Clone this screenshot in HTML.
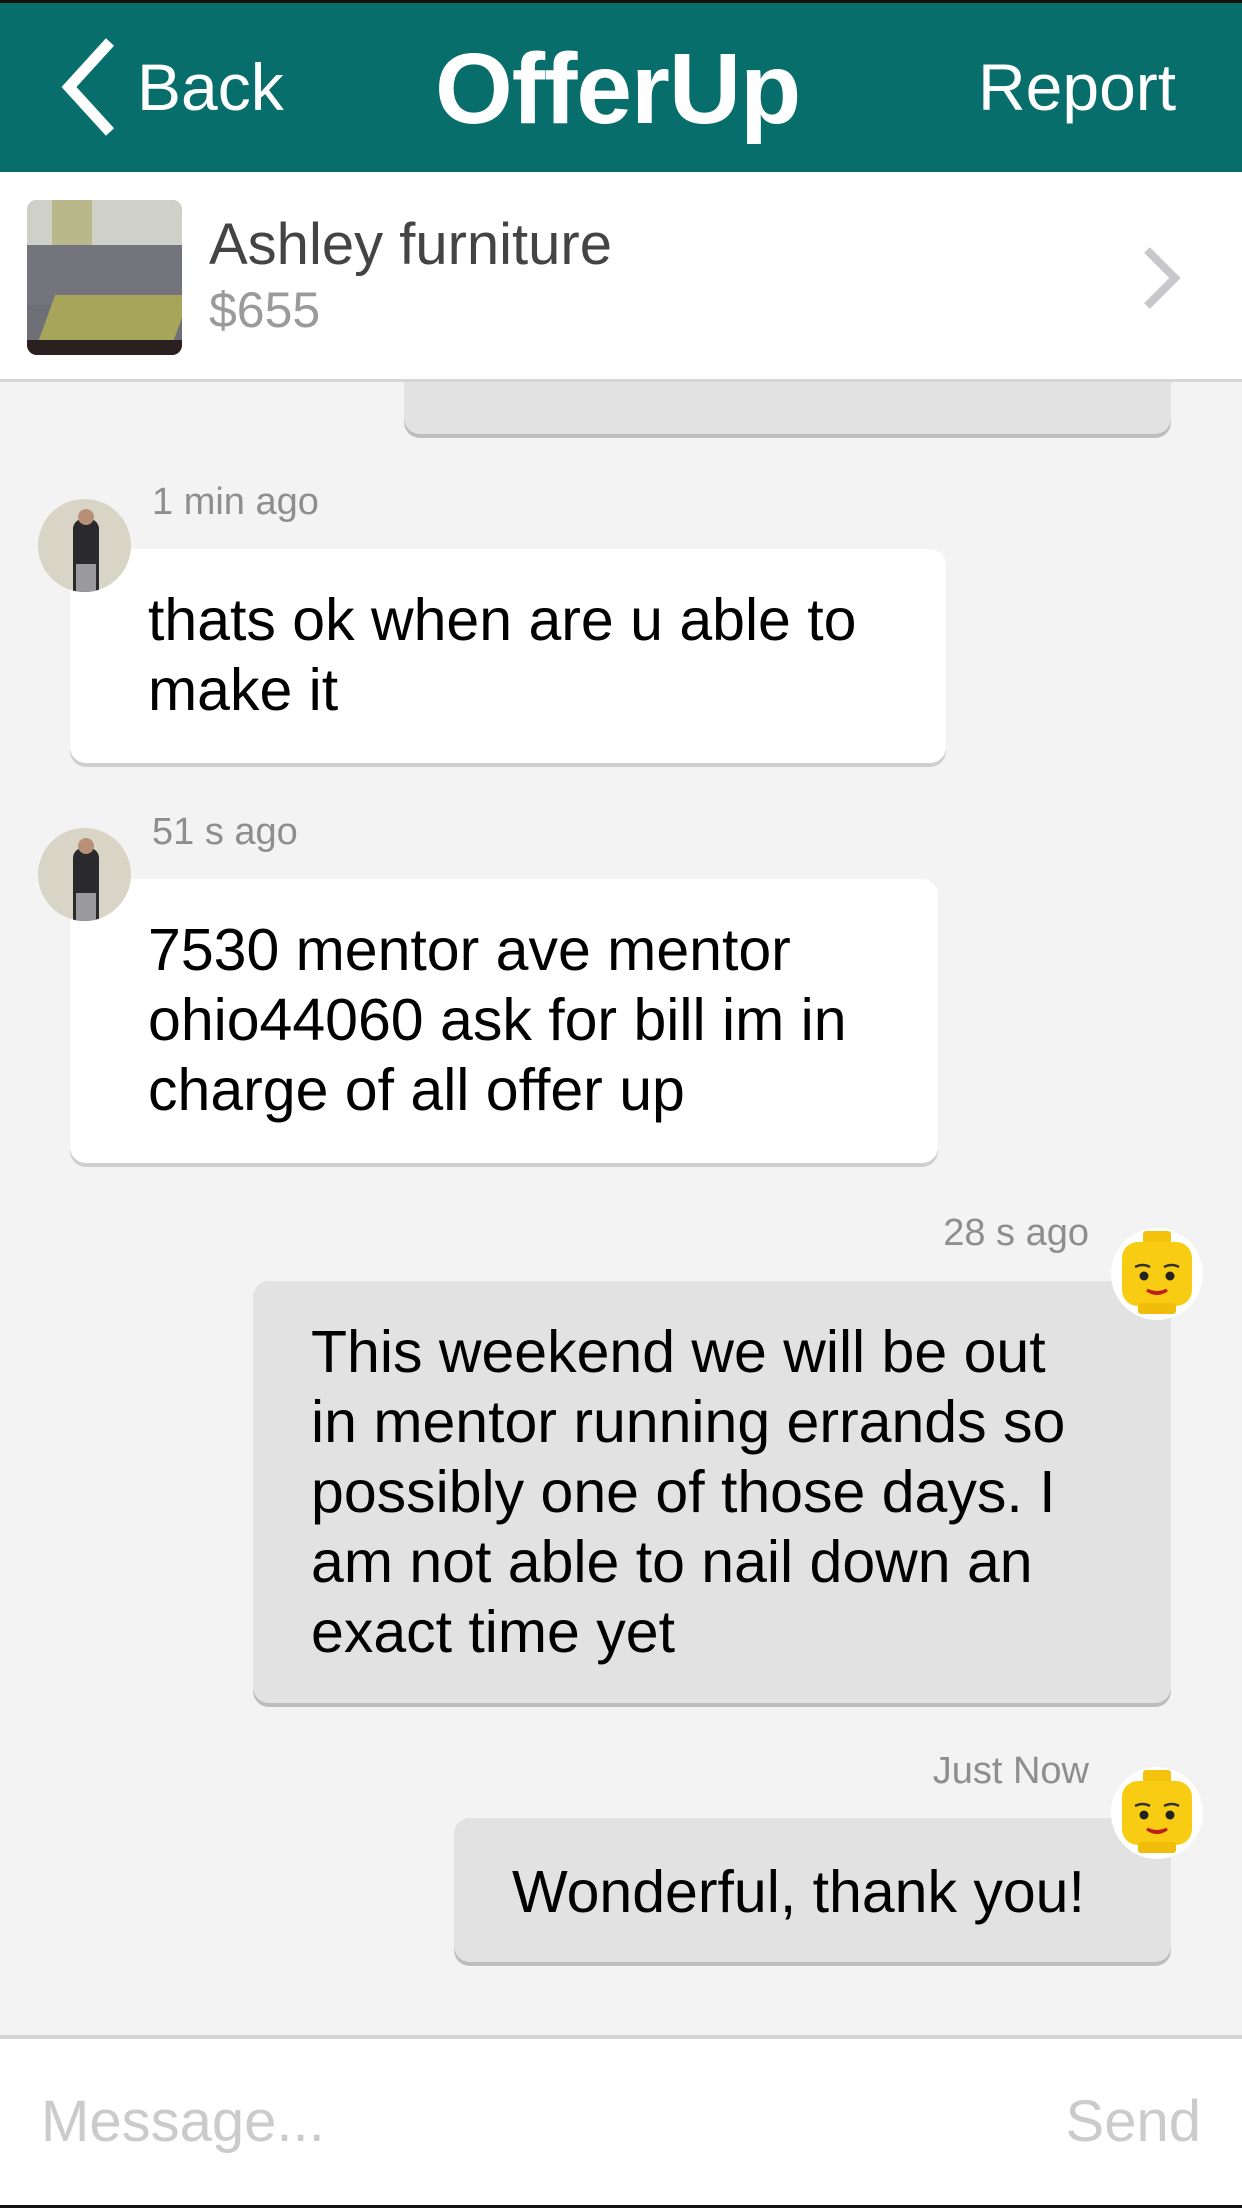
<!DOCTYPE html>
<html><head><meta charset="utf-8"><style>
*{margin:0;padding:0;box-sizing:border-box}
body{width:1242px;height:2208px;position:relative;overflow:hidden;background:#f3f3f3;font-family:"Liberation Sans",Arial,sans-serif}
.a{position:absolute;white-space:nowrap}
.hdr{left:0;top:0;width:1242px;height:172px;background:#076e6c;border-top:3px solid #111}
.bar{left:0;top:172px;width:1242px;height:210px;background:#fff;border-bottom:3px solid #d6d6d6}
.msg{font-size:59px;line-height:70px;color:#000}
.ts{font-size:38px;line-height:38px;color:#8e8e8e}
.wb{background:#fff;border-radius:16px;box-shadow:0 4px 0 #cfcfcf}
.gb{background:#e2e2e2;border-radius:16px;box-shadow:0 4px 0 #bdbdbd}
.av{border-radius:50%;overflow:hidden}
</style></head><body>
<div class="a hdr"></div>
<svg class="a" style="left:55px;top:36px" width="70" height="102" viewBox="0 0 70 102"><polyline points="55,6 14,51 55,96" fill="none" stroke="#fff" stroke-width="11"/></svg>
<div class="a" style="left:137px;top:54px;font-size:66px;line-height:66px;color:#fff">Back</div>
<div class="a" style="left:435px;top:39px;font-size:100px;line-height:100px;color:#fff;font-weight:bold;letter-spacing:-1px">OfferUp</div>
<div class="a" style="left:978px;top:54px;font-size:66px;line-height:66px;color:#fff">Report</div>

<div class="a bar"></div>
<div class="a" style="left:27px;top:200px;width:155px;height:155px;border-radius:10px;overflow:hidden;background:#6f6f78">
 <div class="a" style="left:0;top:0;width:155px;height:50px;background:#cfd0c8"></div>
 <div class="a" style="left:25px;top:0;width:40px;height:55px;background:#b8b88a"></div>
 <div class="a" style="left:0;top:45px;width:155px;height:60px;background:#74747c"></div>
 <div class="a" style="left:20px;top:95px;width:135px;height:45px;background:#a7a55a;transform:skewX(-20deg)"></div>
 <div class="a" style="left:0;top:140px;width:155px;height:15px;background:#2b2020"></div>
</div>
<div class="a" style="left:209px;top:216px;font-size:58px;line-height:58px;color:#444">Ashley furniture</div>
<div class="a" style="left:209px;top:285px;font-size:50px;line-height:50px;color:#9a9a9a">$655</div>
<svg class="a" style="left:1140px;top:246px" width="46" height="64" viewBox="0 0 46 64"><polyline points="7,4 35,32 7,60" fill="none" stroke="#c7c7cc" stroke-width="8"/></svg>

<div class="a gb" style="left:404px;top:370px;width:767px;height:64px;border-radius:0 0 16px 16px;z-index:-1"></div>

<!-- msg1 -->
<div class="a ts" style="left:152px;top:483px">1 min ago</div>
<div class="a wb" style="left:70px;top:549px;width:876px;height:214px"></div>
<div class="a msg" style="left:148px;top:585px">thats ok when are u able to<br>make it</div>
<div class="a av" style="left:38px;top:499px;width:93px;height:93px;background:#d8d4c6"><div class="a" style="left:35px;top:20px;width:26px;height:73px;background:#2a2a2e;border-radius:10px 10px 0 0"></div><div class="a" style="left:40px;top:10px;width:16px;height:16px;border-radius:50%;background:#b89078"></div><div class="a" style="left:38px;top:65px;width:20px;height:28px;background:#9a9a9e"></div></div>

<!-- msg2 -->
<div class="a ts" style="left:152px;top:813px">51 s ago</div>
<div class="a wb" style="left:70px;top:879px;width:868px;height:284px"></div>
<div class="a msg" style="left:148px;top:915px">7530 mentor ave mentor<br>ohio44060 ask for bill im in<br>charge of all offer up</div>
<div class="a av" style="left:38px;top:828px;width:93px;height:93px;background:#d8d4c6"><div class="a" style="left:35px;top:20px;width:26px;height:73px;background:#2a2a2e;border-radius:10px 10px 0 0"></div><div class="a" style="left:40px;top:10px;width:16px;height:16px;border-radius:50%;background:#b89078"></div><div class="a" style="left:38px;top:65px;width:20px;height:28px;background:#9a9a9e"></div></div>

<!-- msg3 -->
<div class="a ts" style="left:0;width:1089px;text-align:right;top:1214px">28 s ago</div>
<div class="a gb" style="left:253px;top:1281px;width:918px;height:422px"></div>
<div class="a msg" style="left:311px;top:1317px">This weekend we will be out<br>in mentor running errands so<br>possibly one of those days. I<br>am not able to nail down an<br>exact time yet</div>

<!-- msg4 -->
<div class="a ts" style="left:0;width:1089px;text-align:right;top:1752px">Just Now</div>
<div class="a gb" style="left:454px;top:1818px;width:717px;height:144px"></div>
<div class="a msg" style="left:512px;top:1857px">Wonderful, thank you!</div>

<!-- lego avatars -->
<svg class="a" style="left:1110px;top:1227px" width="94" height="94" viewBox="0 0 94 94"><circle cx="47" cy="47" r="46" fill="#fff"/><rect x="33" y="4" width="28" height="14" rx="3" fill="#f4c20d"/><rect x="12" y="15" width="70" height="64" rx="16" fill="#f8cc12"/><rect x="28" y="76" width="38" height="11" rx="3" fill="#efbd0a"/><path d="M25 40q8-4 15 0M54 40q8-4 15 0" stroke="#333" stroke-width="2.5" fill="none"/><circle cx="34" cy="49" r="4.5" fill="#222"/><circle cx="60" cy="49" r="4.5" fill="#222"/><path d="M37 63q10 5 20 0q-10 7-20 0z" fill="#c0201b" stroke="#c0201b" stroke-width="3"/></svg>
<svg class="a" style="left:1110px;top:1766px" width="94" height="94" viewBox="0 0 94 94"><circle cx="47" cy="47" r="46" fill="#fff"/><rect x="33" y="4" width="28" height="14" rx="3" fill="#f4c20d"/><rect x="12" y="15" width="70" height="64" rx="16" fill="#f8cc12"/><rect x="28" y="76" width="38" height="11" rx="3" fill="#efbd0a"/><path d="M25 40q8-4 15 0M54 40q8-4 15 0" stroke="#333" stroke-width="2.5" fill="none"/><circle cx="34" cy="49" r="4.5" fill="#222"/><circle cx="60" cy="49" r="4.5" fill="#222"/><path d="M37 63q10 5 20 0q-10 7-20 0z" fill="#c0201b" stroke="#c0201b" stroke-width="3"/></svg>

<!-- input -->
<div class="a" style="left:0;top:2035px;width:1242px;height:173px;background:#fff;border-top:4px solid #d4d4d4;border-bottom:3px solid #111"></div>
<div class="a" style="left:41px;top:2093px;font-size:58px;line-height:58px;color:#cbcbcb">Message...</div>
<div class="a" style="left:0;width:1201px;text-align:right;top:2093px;font-size:58px;line-height:58px;color:#cbcbcb">Send</div>
</body></html>
